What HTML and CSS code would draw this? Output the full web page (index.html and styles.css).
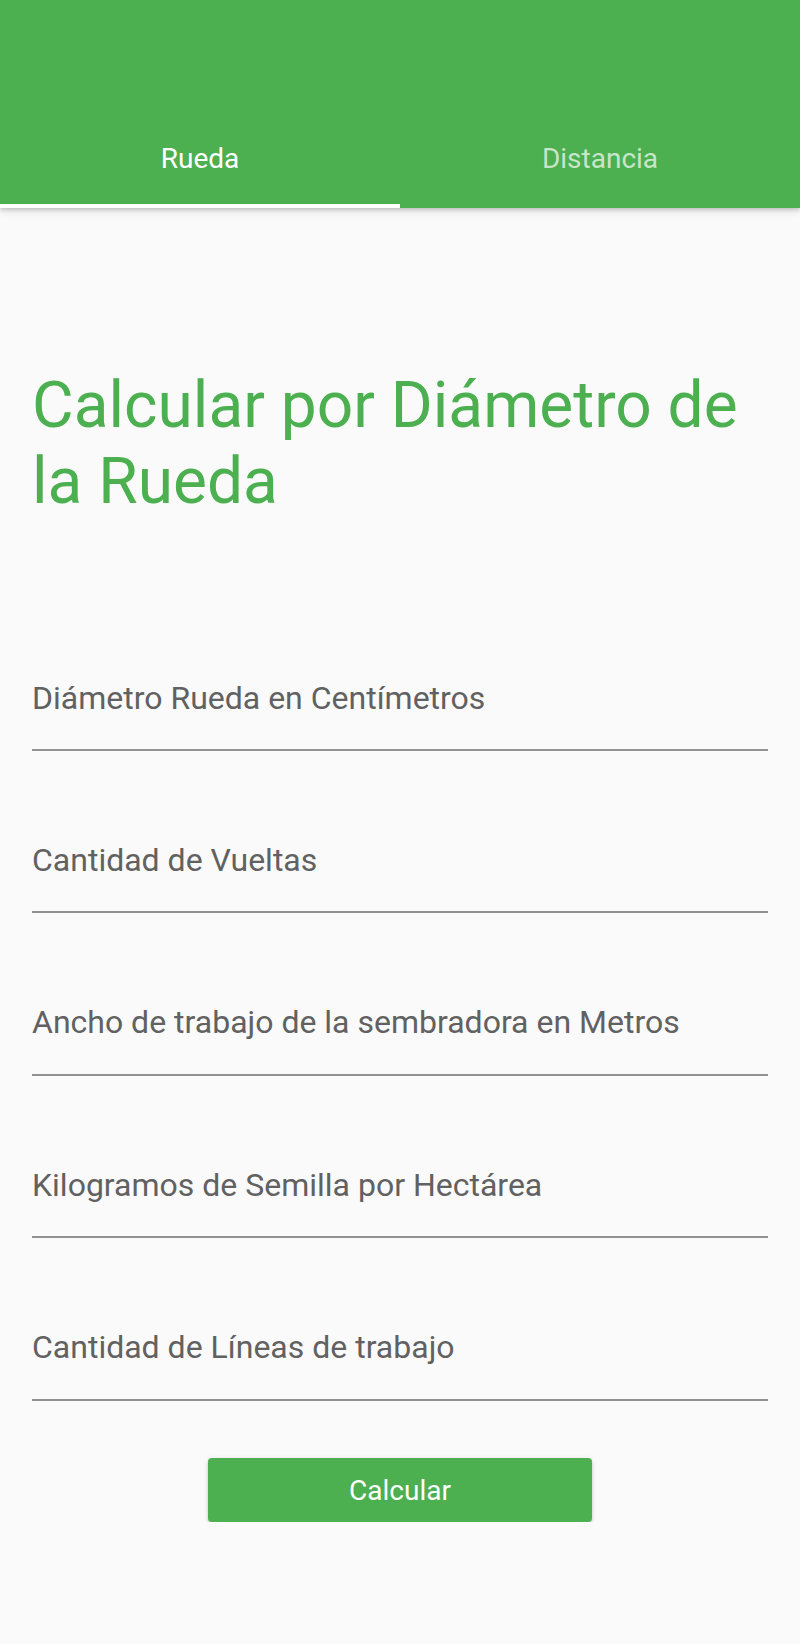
FILE: index.html
```html
<!DOCTYPE html>
<html lang="es">
<head>
<meta charset="utf-8">
<title>Calcular por Diámetro de la Rueda</title>
<link rel="stylesheet" href="styles.css">
</head>
<body>
<header class="appbar">
  <div class="toolbar"></div>
  <nav class="tabs">
    <div class="tab tab-active">Rueda</div>
    <div class="tab">Distancia</div>
  </nav>
</header>
<main class="content">
  <h1 class="title">Calcular por Diámetro de la Rueda</h1>
  <div class="fields">
    <div class="field"><span class="hint">Diámetro Rueda en Centímetros</span></div>
    <div class="field"><span class="hint">Cantidad de Vueltas</span></div>
    <div class="field"><span class="hint">Ancho de trabajo de la sembradora en Metros</span></div>
    <div class="field"><span class="hint">Kilogramos de Semilla por Hectárea</span></div>
    <div class="field"><span class="hint">Cantidad de Líneas de trabajo</span></div>
  </div>
  <div class="actions">
    <button class="btn">Calcular</button>
  </div>
</main>
</body>
</html>
```
FILE: styles.css
```css
* { box-sizing: border-box; }
html, body {
  margin: 0;
  padding: 0;
  background: #fafafa;
  font-family: Roboto, "Liberation Sans", sans-serif;
}
.appbar {
  background: #4caf50;
  box-shadow: 0 2px 4px rgba(0,0,0,0.18), 0 4px 10px rgba(0,0,0,0.08);
}
.toolbar { height: 112px; }
.tabs {
  display: flex;
  height: 96px;
}
.tab {
  flex: 1;
  display: flex;
  align-items: center;
  justify-content: center;
  padding-bottom: 4px;
  font-size: 28px;
  font-weight: 400;
  color: rgba(255,255,255,0.7);
}
.tab-active {
  color: #ffffff;
  box-shadow: inset 0 -4px 0 #ffffff;
}
.content {
  padding: 0 32px;
}
.title {
  margin: 160px 0 0;
  font-size: 64px;
  line-height: 76px;
  font-weight: 400;
  color: #4caf50;
}
.fields {
  margin-top: 68.6px;
}
.field {
  padding-top: 90px;
  padding-bottom: 32.4px;
  border-bottom: 2px solid #929292;
}
.hint {
  display: block;
  font-size: 32px;
  line-height: 38px;
  color: #616161;
}
.actions {
  display: flex;
  justify-content: center;
  padding-top: 57.5px;
}
.btn {
  width: 384px;
  height: 64px;
  border: none;
  border-radius: 4px;
  background: #4caf50;
  color: #ffffff;
  font-family: Roboto, "Liberation Sans", sans-serif;
  font-size: 28px;
  font-weight: 400;
  box-shadow: 0 2px 3px rgba(0,0,0,0.18), 0 1px 6px rgba(0,0,0,0.08);
  padding: 0;
}
```
